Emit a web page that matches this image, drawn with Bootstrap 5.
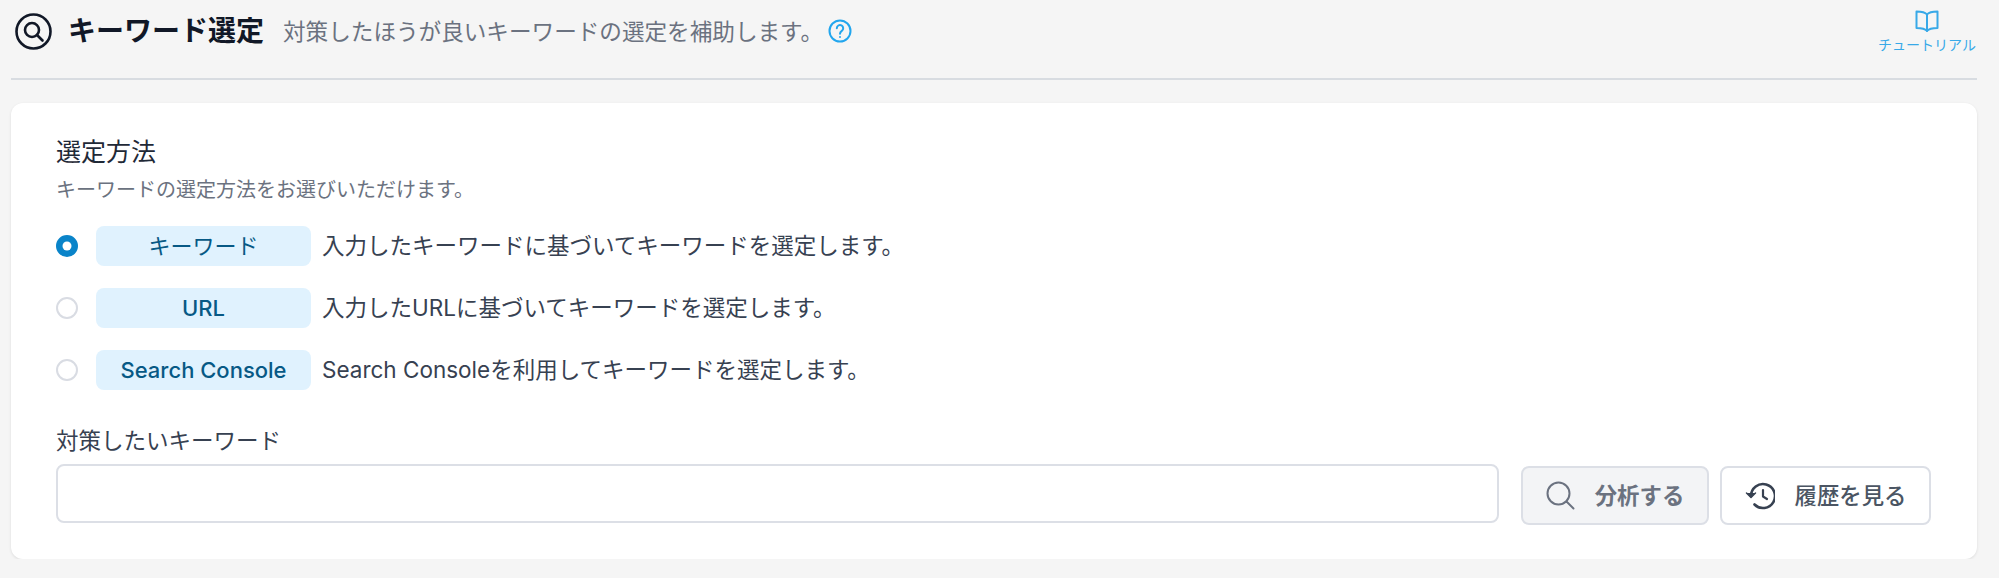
<!DOCTYPE html>
<html lang="ja">
<head>
    <meta charset="UTF-8">
    <title>キーワード選定</title>
    <link href="https://cdn.jsdelivr.net/npm/bootstrap@5.3.3/dist/css/bootstrap.min.css" rel="stylesheet">
    <style>
    body {
      background-color: #f5f5f5;
      font-family: Inter, "Noto Sans CJK JP", sans-serif;
      color: #374151;
      padding: 0 22px 0 11px;
      font-size: 22.5px;
      overflow: hidden;
    }
    .page-head {
      height: 80px;
      border-bottom: 2px solid #d8dce1;
      padding: 13px 0 0 4px;
    }
    .page-title { font-size: 28px; font-weight: 700; color: #111827; margin: 0 19px 0 16px; line-height: 37px; }
    .page-desc { color: #6b7280; font-size: 22.6px; line-height: 37px; }
    .help-icon { margin: 6px 0 0 5px; }
    .tutorial-link { color: #38a9e8; font-size: 14px; line-height: 16px; width: 96px; margin: -4px 2px 0 0; text-decoration: none; }
    .tutorial-link svg { margin-top: 1px; }
    .tutorial-link span { margin-top: 5px; }
    .panel {
      background: #fff;
      border-radius: 12px;
      margin-top: 23px;
      height: 456px;
      padding: 31px 46px 0 45px;
      box-shadow: 0 1px 3px rgba(0,0,0,.1);
    }
    .panel-title { font-size: 25px; line-height: 36px; color: #1f2937; margin: 0; font-weight: 400; }
    .panel-sub { font-size: 20px; line-height: 28px; color: #6b7280; margin: 6px 0 22px; }
    .method-row { height: 40px; margin-bottom: 22px; }
    .method-row .form-check-input {
      width: 22px; height: 22px; margin: 0 18px 0 0;
      border: 2px solid #d9dce3;
      flex-shrink: 0;
    }
    .method-row .form-check-input:checked {
      background-color: #0a84c9;
      border-color: #0a84c9;
    }
    .method-pill {
      width: 215px; height: 40px; line-height: 40px;
      background: #e0f2fe; color: #075985;
      border-radius: 8px; text-align: center; margin-right: 11px;
      font-size: 22px;
      font-weight: 500;
    }
    .pill-kana { font-weight: 400; }
    .field-label { line-height: 32px; color: #374151; margin: 35px 0 7px; display: block; }
    .keyword-input {
      height: 59px;
      border: 2px solid #dcdfe6;
      border-radius: 8px;
      flex: 1 1 auto;
      width: 1px;
    }
    .action-btn {
      height: 59px;
      margin-top: 2px;
      padding: 0;
      flex: 0 0 auto;
      white-space: nowrap;
      border: 2px solid #dcdfe6;
      border-radius: 8px;
      font-size: 22.4px;
      font-weight: 500;
      color: #4b5563;
      background: #fff;
      gap: 20px;
    }
    .btn-analyze { width: 188px; margin-left: 22px; background: #f3f4f6; color: #6b7280; font-weight: 700; }
    .btn-history { width: 211px; margin-left: 11px; }
    .btn-history:hover, .btn-analyze:hover { border-color: #dcdfe6; }
    </style>
</head>
<body>

  <header class="page-head d-flex justify-content-between">
    <div class="d-flex align-items-start">
      <svg width="37" height="37" viewBox="0 0 37 37" fill="none" stroke="#111827" stroke-width="2.600" stroke-linecap="round">
        <circle cx="18.500" cy="18.500" r="17"/>
        <circle cx="17" cy="17" r="7"/>
        <path d="M22 22l5.500 5.500"/>
      </svg>
      <h1 class="page-title">キーワード選定</h1>
      <span class="page-desc">対策したほうが良いキーワードの選定を補助します。</span>
      <svg class="help-icon" width="24" height="24" viewBox="0 0 24 24" fill="none" stroke="#22a6ee" stroke-width="2" stroke-linecap="round">
        <circle cx="12" cy="12" r="10.500"/>
        <path d="M8.800 9.200a3.200 3.200 0 1 1 5 2.700c-1.100.8-1.800 1.400-1.800 2.900"/>
        <path d="M12 18v.1"/>
      </svg>
    </div>
    <a class="tutorial-link d-flex flex-column align-items-center" href="#">
      <svg width="24" height="22" viewBox="0 0 24 22" fill="none" stroke="#38a9e8" stroke-width="2" stroke-linejoin="round" stroke-linecap="round">
        <path d="M12 4.500C10 2 7 1.500 1.500 1.500v16.500c5.500 0 8.500.5 10.500 3 2-2.500 5-3 10.500-3V1.500C17 1.500 14 2 12 4.500z"/>
        <path d="M12 4.500V21"/>
      </svg>
      <span class="text-nowrap">チュートリアル</span>
    </a>
  </header>

  <main class="panel">
    <h2 class="panel-title">選定方法</h2>
    <p class="panel-sub">キーワードの選定方法をお選びいただけます。</p>

    <div class="method-row d-flex align-items-center">
      <input class="form-check-input" type="radio" name="method" checked>
      <span class="method-pill pill-kana">キーワード</span>
      <span>入力したキーワードに基づいてキーワードを選定します。</span>
    </div>
    <div class="method-row d-flex align-items-center">
      <input class="form-check-input" type="radio" name="method">
      <span class="method-pill">URL</span>
      <span>入力したURLに基づいてキーワードを選定します。</span>
    </div>
    <div class="method-row d-flex align-items-center">
      <input class="form-check-input" type="radio" name="method">
      <span class="method-pill">Search Console</span>
      <span>Search Consoleを利用してキーワードを選定します。</span>
    </div>

    <label class="field-label" for="keyword">対策したいキーワード</label>
    <div class="d-flex align-items-start">
      <input class="form-control keyword-input" id="keyword" type="text">
      <button class="btn action-btn btn-analyze d-flex align-items-center justify-content-center" type="button">
        <svg width="29" height="29" viewBox="0 0 29 29" fill="none" stroke="#6b7280" stroke-width="2" stroke-linecap="round">
          <circle cx="12.500" cy="12.500" r="11"/>
          <path d="M20.500 20.500l7 7"/>
        </svg>
        分析する
      </button>
      <button class="btn action-btn btn-history d-flex align-items-center justify-content-center" type="button">
        <svg width="30" height="28" viewBox="0 0 30 28" fill="none" stroke="#374151" stroke-width="2.600" stroke-linecap="round" stroke-linejoin="round">
          <path d="M6 14a12 12 0 1 1 3.500 8.500"/>
          <path d="M1.500 11l4.500 4.500 4.500-4.500" fill="#374151" stroke-width="1.500"/>
          <path d="M18 8v6.500l4 2.500" stroke-width="2.200"/>
        </svg>
        履歴を見る
      </button>
    </div>
  </main>

  <script src="https://cdn.jsdelivr.net/npm/bootstrap@5.3.3/dist/js/bootstrap.bundle.min.js"></script>
</body>
</html>
